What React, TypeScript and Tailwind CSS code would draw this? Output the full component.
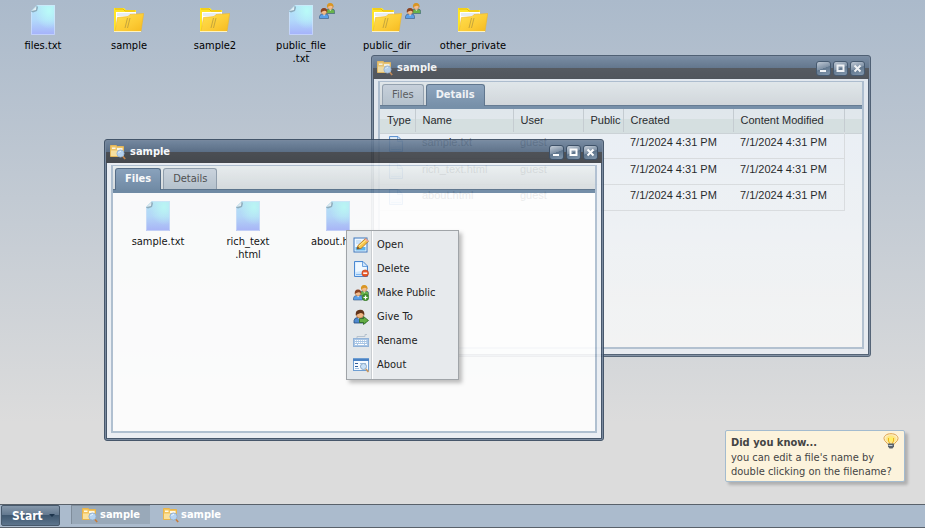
import { useState } from "react";
import type { ReactNode } from "react";
import clsx from "clsx";

type Kind = "file" | "folder";

interface DesktopItem {
  label: string[];
  kind: Kind;
  isPublic?: boolean;
}

const desktopItems: DesktopItem[] = [
  { label: ["files.txt"], kind: "file" },
  { label: ["sample"], kind: "folder" },
  { label: ["sample2"], kind: "folder" },
  { label: ["public_file", ".txt"], kind: "file", isPublic: true },
  { label: ["public_dir"], kind: "folder", isPublic: true },
  { label: ["other_private"], kind: "folder" },
];

const folderItems: DesktopItem[] = [
  { label: ["sample.txt"], kind: "file" },
  { label: ["rich_text", ".html"], kind: "file" },
  { label: ["about.html"], kind: "file" },
];

const rows = ["sample.txt", "rich_text.html", "about.html"];

const FileIcon = () => (
  <svg width="24" height="30" viewBox="0 0 24 30">
    <defs>
      <linearGradient id="fileBody" x1="0" y1="0" x2="0" y2="1">
        <stop offset="0" stopColor="#b4e6f8" />
        <stop offset=".5" stopColor="#b2d9fb" />
        <stop offset="1" stopColor="#a5b1fa" />
      </linearGradient>
      <radialGradient id="fileGlow" cx=".75" cy=".2" r=".6">
        <stop offset="0" stopColor="#b9fbf8" />
        <stop offset="1" stopColor="#b9fbf8" stopOpacity="0" />
      </radialGradient>
    </defs>
    <path d="M6 0H24V30H0V6Z" fill="url(#fileBody)" />
    <path d="M6 0H24V30H0V6Z" fill="url(#fileGlow)" />
    <path d="M6.500 .5H23.500V29.500H.5V7" fill="none" stroke="#d5e4fb" strokeOpacity=".6" />
    <path d="M0 6.500L6 .5L7 2.500L6 6L2 7.500Z" fill="#8aa9bb" />
    <path d="M.5 6L5.500 1L5 5Z" fill="#e3f0f5" />
  </svg>
);

const FolderIcon = () => (
  <svg width="30" height="26" viewBox="0 0 30 26">
    <defs>
      <linearGradient id="folderFront" x1="0" y1="0" x2="1" y2="1">
        <stop offset="0" stopColor="#ffe14e" />
        <stop offset=".6" stopColor="#fccb35" />
        <stop offset="1" stopColor="#f5b91f" />
      </linearGradient>
    </defs>
    <path d="M0 1H10L12 3H22V24H0Z" fill="#ffe528" />
    <path d="M1 2H9L11 4H21" fill="none" stroke="#e8b80d" />
    <path d="M2 5H22V9L18 20H2Z" fill="#fff" />
    <path d="M3 6H21V9H3Z" fill="#e6edf2" />
    <path d="M3.500 10.500L14 9.500L16 7.500L29.700 6.500L27 24.500H1Z" fill="url(#folderFront)" stroke="#eeb72a" strokeWidth=".6" />
    <path d="M0 24.500H27" stroke="#fff3be" />
    <path d="M13.500 11L11 21M16 11L13.500 21" stroke="#b79a3c" strokeWidth=".8" />
  </svg>
);

const Person = ({ x, y, shirt, hair }: { x: number; y: number; shirt: string; hair: string }) => (
  <g transform={`translate(${x} ${y})`}>
    <path d="M.5 10.500V8.500Q1 6 3.500 6H6.500Q9.500 6 9.500 8.500V10.500Z" fill={shirt} stroke="#35577f" strokeWidth=".6" />
    <path d="M4 6L5 8L6.500 6Z" fill="#fff" />
    <circle cx="5" cy="3.800" r="2.700" fill="#f3bd8e" stroke="#a0622f" strokeWidth=".4" />
    <path d="M1.800 4.500Q1.200 0 5 0T8.300 4.500Q7.500 2.500 5.500 2.700Q3 3.300 1.800 4.500Z" fill={hair} />
  </g>
);

const UsersIcon = ({ className }: { className?: string }) => (
  <svg width="16" height="16" viewBox="0 0 16 16" className={className}>
    <Person x={6.200} y={0} shirt="#68b34c" hair="#d99622" />
    <Person x={0} y={5} shirt="#5a9fe8" hair="#8b4321" />
  </svg>
);

const OpenIcon = () => (
  <svg width="16" height="16" viewBox="0 0 16 16">
    <rect x="1" y="1" width="13" height="14" fill="#eef7ff" stroke="#3f78bd" />
    <path d="M2.500 10H12.500V13.500H2.500Z" fill="#5bb4ee" />
    <path d="M3 4H8M3 6H7" stroke="#a9cff2" />
    <path d="M4 12L5 8.500L12.500 1.500L15.500 4.200L8 11.500Z" fill="#f8c648" stroke="#a96a17" strokeWidth=".8" />
    <path d="M6 9L13.500 2.500" stroke="#fff0a5" />
    <path d="M4 12L4.700 9.500L6.800 11.400Z" fill="#6a4a2b" />
    <path d="M11.500 2.500L12.800 1.300L15.500 4L14.300 5Z" fill="#eda49a" />
  </svg>
);

const DocIcon = ({ children }: { children?: ReactNode }) => (
  <svg width="16" height="16" viewBox="0 0 16 16">
    <path d="M1.500 .5H10L14.500 5V15.500H1.500Z" fill="#cfe6fc" stroke="#4a88d2" />
    <path d="M2.500 1.500H9V5.500H13.500V9L2.500 11Z" fill="#f0f8ff" />
    <path d="M9.500 1V5.500H14" fill="none" stroke="#6fa4e0" />
    <path d="M3 13.500H13" stroke="#7db6ef" />
    {children}
  </svg>
);

const DeleteIcon = () => (
  <DocIcon>
    <circle cx="12.200" cy="12.200" r="3.300" fill="#e8592b" stroke="#b93a15" strokeWidth=".6" />
    <path d="M10.200 12.200H14.200" stroke="#fff" strokeWidth="1.500" />
  </DocIcon>
);

const MakePublicIcon = () => (
  <svg width="16" height="16" viewBox="0 0 16 16">
    <Person x={6.200} y={0} shirt="#68b34c" hair="#d99622" />
    <Person x={0} y={4.500} shirt="#5a9fe8" hair="#8b4321" />
    <circle cx="12.500" cy="12.500" r="3.200" fill="#4a9d35" stroke="#25641b" strokeWidth=".6" />
    <path d="M12.500 10.500V14.500M10.500 12.500H14.500" stroke="#fff" strokeWidth="1.200" />
  </svg>
);

const GiveIcon = () => (
  <svg width="16" height="16" viewBox="0 0 16 16">
    <path d="M1 14V11.500Q1.500 8.500 5 8.500H9Q12 8.500 12.500 12V14Z" fill="#4e89ce" stroke="#234a7f" strokeWidth=".8" />
    <path d="M5 8.500L7 12L9 8.500Z" fill="#fff" />
    <circle cx="7" cy="5.500" r="3.700" fill="#f0b784" stroke="#8a4d20" strokeWidth=".5" />
    <path d="M2.800 6.500Q2 1 7 .8T11.300 6.500Q10 3.500 7.500 4Q4 5 2.800 6.500Z" fill="#61341b" />
    <path d="M6.500 9.500H10.500V7.500L15.500 11.500L10.500 15.500V13.500H6.500Z" fill="#62ac43" stroke="#2b671d" strokeWidth=".8" />
  </svg>
);

const KeyboardIcon = () => (
  <svg width="16" height="16" viewBox="0 0 16 16">
    <path d="M4 5V3.500H12V1.500H14" fill="none" stroke="#b6c2ce" />
    <rect x=".5" y="5.500" width="15" height="8" fill="#a8c5e5" stroke="#93b3d8" />
    <path d="M2 7.500H14M2 9.500H14" stroke="#fff" strokeDasharray="1.300 .7" />
    <path d="M2 11.500H4M5 11.500H11M12 11.500H14" stroke="#fff" />
  </svg>
);

const AboutIcon = () => (
  <svg width="16" height="16" viewBox="0 0 16 16">
    <rect x=".5" y="1.500" width="15" height="12" fill="#f7fbff" stroke="#6e9ed2" />
    <path d="M0 2H16V4H0Z" fill="#4a82c3" />
    <path d="M2 6.500H5M2 9.500H5" stroke="#345f99" />
    <path d="M7 6.500H13M7 9.500H10M2 11.500H6" stroke="#9ec1e6" />
    <circle cx="10.500" cy="9.500" r="3" fill="#c9e2f8" stroke="#8da8c2" />
    <path d="M12.800 12L15.500 15" stroke="#c8975f" strokeWidth="1.800" />
  </svg>
);

const FolderSearchIcon = () => (
  <svg width="16" height="16" viewBox="0 0 16 16">
    <path d="M.5 1.500H6L7.500 2.500H13.500V12.500H.5Z" fill="#f4c45d" stroke="#e9b54c" />
    <path d="M2 3.500H5.500V5H2ZM7 4H12.500V6H7Z" fill="#fffbea" />
    <path d="M1 6.500H13V12H1Z" fill="#fbe19b" />
    <circle cx="10.500" cy="9.500" r="3.600" fill="#b5d3f1" stroke="#8ba9cf" strokeWidth=".8" />
    <path d="M8.500 9Q9 7.500 11 7.300" fill="none" stroke="#e9f5ff" />
    <path d="M13 12.500L15.200 15" stroke="#c47c3d" strokeWidth="1.600" />
  </svg>
);

const BulbIcon = ({ className }: { className?: string }) => (
  <svg width="16" height="16" viewBox="0 0 16 16" className={className}>
    <defs>
      <radialGradient id="bulbGlow">
        <stop offset="0" stopColor="#fff45c" />
        <stop offset=".6" stopColor="#fde58b" />
        <stop offset="1" stopColor="#fff6dc" />
      </radialGradient>
    </defs>
    <path d="M8 .7C3.500 .7 1 3 1 5.500C1 8.500 4.500 9.500 5 11.500H11C11.500 9.500 15 8.500 15 5.500C15 3 12.500 .7 8 .7Z" fill="url(#bulbGlow)" stroke="#e0a34c" />
    <path d="M5.500 5V8L7 11M10.500 5V8L9 11" fill="none" stroke="#edb51f" />
    <path d="M5 10.500H11V13.500L9.500 15.500H6.500L5 13.500Z" fill="#59626c" />
    <path d="M5.500 12.500H9.500" stroke="#c2cbd3" />
  </svg>
);

const Item = ({ item, className }: { item: DesktopItem; className: string }) => (
  <li className={clsx("relative flex shrink-0 flex-col items-center", className)}>
    <div className="flex h-[30px] items-center">
      {item.kind === "file" ? <FileIcon /> : <FolderIcon />}
    </div>
    <span className="mt-1 text-center text-[11px] leading-[13px]">
      {item.label.map((line) => (
        <span key={line} className="block">
          {line}
        </span>
      ))}
    </span>
    {item.isPublic && <UsersIcon className="absolute -top-0.5 right-[9px]" />}
  </li>
);

const controls = [
  { name: "Minimize", d: "M4 10H10" },
  { name: "Maximize", d: "M4.500 4.500H10.500V10H4.500Z" },
  { name: "Close", d: "M4.500 4.500L10.500 10.500M10.500 4.500L4.500 10.500" },
];

interface WindowProps {
  title: string;
  tabs: string[];
  active: string;
  onSelect: (tab: string) => void;
  className: string;
  children: ReactNode;
}

const Window = ({ title, tabs, active, onSelect, className, children }: WindowProps) => (
  <section
    className={clsx(
      "absolute flex h-[302px] w-[500px] flex-col rounded-[3px] border border-[#37495f] bg-[#708299] p-px",
      className
    )}
  >
    <header className="flex h-[22px] shrink-0 items-center gap-1 bg-[linear-gradient(#6b8099,#50657e_50%,#3f4247_50%,#383b40)] px-1">
      <FolderSearchIcon />
      <h2 className="flex-1 text-[11px] font-bold text-white">{title}</h2>
      <div className="flex gap-0.5">
        {controls.map((control) => (
          <button
            key={control.name}
            aria-label={control.name}
            className="size-[15px] overflow-hidden rounded-[3px] border border-[#2c4159] bg-[linear-gradient(160deg,#c3ccd7,#72869c_48%,#4e667f_50%,#7890a8)]"
          >
            <svg width="13" height="13" viewBox="1 1 13 13">
              <path d={control.d} fill="none" stroke="#fff" strokeWidth="2" />
            </svg>
          </button>
        ))}
      </div>
    </header>
    <div className="flex min-h-0 flex-1 flex-col border border-t-0 border-[#37495f] bg-[#edf1f6] px-1 pt-0.5 pb-[5px]">
      <div className="flex min-h-0 flex-1 flex-col border-2 border-t border-[#acbdcf] bg-white">
        <div className="flex h-[27px] shrink-0 items-end gap-0.5 border-b-[3px] border-[#6884a0] bg-[linear-gradient(#ebf0f1,#d7dbdd)] px-0.5 shadow-[inset_0_-1px_#526b85]">
          {tabs.map((tab) => (
            <button
              key={tab}
              onClick={() => onSelect(tab)}
              className={clsx(
                "rounded-t-[3px] border border-b-0 px-[9px] text-[11px]",
                tab === active
                  ? "h-[22px] border-[#4b647f] bg-[linear-gradient(#849eba,#6884a0)] font-bold text-white"
                  : "mb-px h-[21px] border-[#8c9aa8] bg-[linear-gradient(#cbd4de,#b4c1cc)] text-[#444]"
              )}
            >
              {tab}
            </button>
          ))}
        </div>
        {children}
      </div>
    </div>
  </section>
);

const DetailsTable = () => (
  <div className="h-full bg-[linear-gradient(#ebf0f4_0,#ebf0f4_10px,#dce6e5_10px,#dce6e5_24px,#d0d6d8_24px,#d0d6d8_25px,#f6fafe_25px,#fbfbfa)] font-['Liberation_Sans',sans-serif] text-[11px] text-black">
    <table className="w-[464px] table-fixed border-collapse text-left">
      <colgroup>
        <col className="w-[35px]" />
        <col className="w-[98px]" />
        <col className="w-[70px]" />
        <col className="w-[40px]" />
        <col className="w-[110px]" />
        <col className="w-[111px]" />
      </colgroup>
      <thead>
        <tr className="h-[23px]">
          {["Type", "Name", "User", "Public", "Created", "Content Modified"].map((name) => (
            <th key={name} className="border-r border-[#c8ced2] pl-[7px] font-normal whitespace-nowrap">
              {name}
            </th>
          ))}
        </tr>
      </thead>
      <tbody>
        {rows.map((name) => (
          <tr key={name} className="h-[26px] border-r border-b border-[#dfe1e2] align-top leading-5">
            <td className="pt-1 pl-2">
              <DocIcon />
            </td>
            <td className="pl-[7px]">{name}</td>
            <td className="pl-[7px]">guest</td>
            <td />
            <td className="pl-[7px]">7/1/2024 4:31 PM</td>
            <td className="pl-[7px]">7/1/2024 4:31 PM</td>
          </tr>
        ))}
      </tbody>
    </table>
  </div>
);

const FileGrid = () => (
  <ul className="flex pt-2">
    {folderItems.map((item) => (
      <Item key={item.label[0]} item={item} className="w-[90px]" />
    ))}
  </ul>
);

const menuItems = [
  { label: "Open", Icon: OpenIcon },
  { label: "Delete", Icon: DeleteIcon },
  { label: "Make Public", Icon: MakePublicIcon },
  { label: "Give To", Icon: GiveIcon },
  { label: "Rename", Icon: KeyboardIcon },
  { label: "About", Icon: AboutIcon },
];

const ContextMenu = () => (
  <div
    role="menu"
    className="absolute top-[230px] left-[346px] w-[113px] border border-[#a0a4a8] bg-[linear-gradient(90deg,#e3e7ea_24px,#c9cdd1_24px,#c9cdd1_25px,#fff_25px,#fff_26px,#e7eaed_26px)] py-0.5 shadow-[3px_3px_4px_rgba(0,0,0,0.25)]"
  >
    {menuItems.map(({ label, Icon }) => (
      <button
        key={label}
        role="menuitem"
        className="flex h-6 w-full items-center gap-2 pl-1.5 text-left text-[11px] text-[#222]"
      >
        <Icon />
        {label}
      </button>
    ))}
  </div>
);

const App = () => {
  const [backTab, setBackTab] = useState("Details");
  const [frontTab, setFrontTab] = useState("Files");

  return (
    <div className="flex h-screen flex-col overflow-hidden bg-[linear-gradient(#abbacb,#dcdcdc_80%)] font-['DejaVu_Sans_Condensed','Noto_Sans',sans-serif] text-black">
      <main className="relative min-h-0 flex-1">
        <ul className="flex pt-[5px]">
          {desktopItems.map((item) => (
            <Item key={item.label[0]} item={item} className="w-[86px]" />
          ))}
        </ul>

        <Window
          title="sample"
          tabs={["Files", "Details"]}
          active={backTab}
          onSelect={setBackTab}
          className="top-[55px] left-[371px] opacity-80"
        >
          {backTab === "Details" ? <DetailsTable /> : <FileGrid />}
        </Window>
        <Window
          title="sample"
          tabs={["Files", "Details"]}
          active={frontTab}
          onSelect={setFrontTab}
          className="top-[139px] left-[104px] opacity-90"
        >
          {frontTab === "Details" ? <DetailsTable /> : <FileGrid />}
        </Window>
        <ContextMenu />

        <aside className="absolute right-5 bottom-[22px] w-[180px] rounded-[2px] border border-[#a3bbcf] bg-[#fcf3dc] px-[5px] pt-[5px] pb-0.5 text-[11px] leading-[14px] text-[#444] shadow-[3px_3px_3px_rgba(0,0,0,0.2)]">
          <BulbIcon className="absolute top-0.5 right-[5px]" />
          <h3 className="mb-px font-bold">Did you know...</h3>
          <p>you can edit a file's name by double clicking on the filename?</p>
        </aside>
      </main>

      <footer className="flex h-6 shrink-0 border-y border-[#59616a] bg-[#abbbcd]">
        <button className="mr-[11px] ml-px flex h-[21px] w-[59px] items-center gap-1.5 rounded-[2px] border border-[#47596c] bg-[linear-gradient(#8799ac,#60768d_50%,#3f5870_50%,#5c748c)] pl-2.5 text-[12px] font-bold text-white">
          Start
          <svg width="6" height="3" viewBox="0 0 6 3">
            <path d="M0 0H6L3 3Z" fill="#1c344c" />
          </svg>
        </button>
        <div className="flex gap-0.5">
          {["open", "behind"].map((id) => (
            <button
              key={id}
              className={clsx(
                "flex h-[19px] w-[79px] items-center gap-0.5 border-t border-l pl-2.5 text-[11px] font-bold text-white",
                id === "open" ? "border-[#7f8d9b] bg-[#99a9b9]" : "border-transparent"
              )}
            >
              <FolderSearchIcon />
              sample
            </button>
          ))}
        </div>
      </footer>
    </div>
  );
};

export default App;
